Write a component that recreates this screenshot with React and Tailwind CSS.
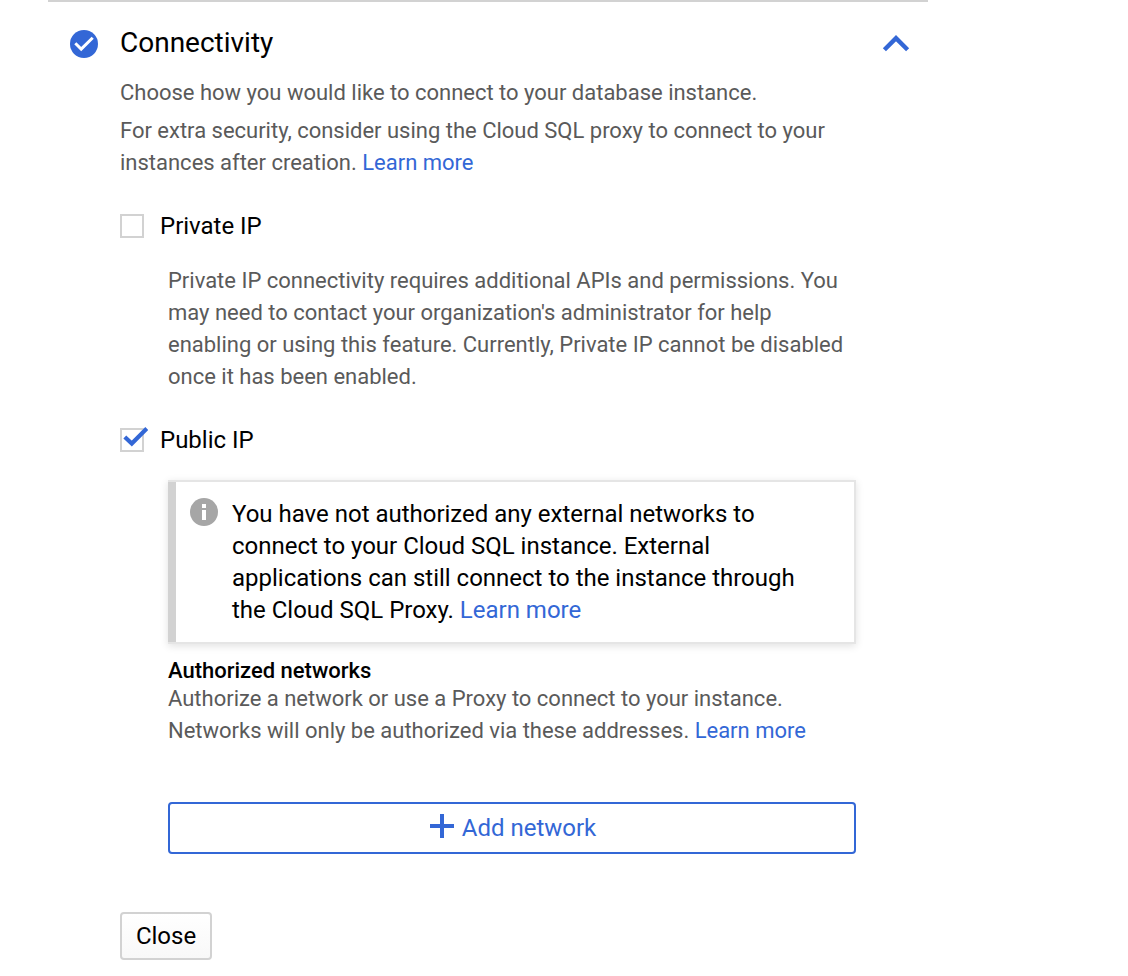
function LearnMore() {
  return <a className="text-[#3367d6]">Learn more</a>;
}

function Checkbox({ label, checked }) {
  return (
    <div className="flex h-8 items-center gap-4">
      <span className="relative size-6 shrink-0 border-2 border-[#d2d2d2] bg-white">
        {checked && (
          <svg className="absolute -top-1 -left-0.5 h-6 w-7" viewBox="0 0 28 24">
            <path d="M4.8 11L11.8 17.5L26.8 2.5" fill="none" stroke="#3367d6" strokeWidth="4.2" />
          </svg>
        )}
      </span>
      <span className="text-2xl leading-8 text-black">{label}</span>
    </div>
  );
}

export default function App() {
  return (
    <main className="h-[976px] w-[1128px] overflow-hidden bg-white pl-12 font-['Roboto',sans-serif] tracking-[-0.008px] whitespace-nowrap">
      <section className="w-[880px] border-t-2 border-[#d2d2d2] text-[22px] leading-8 text-[#5a5a5a]">
        <header className="flex h-[75px] items-center pt-2 pr-[18px] pl-[22px]">
          <svg className="size-7" viewBox="0 0 28 28">
            <circle cx="14" cy="14" r="14" fill="#3367d6" />
            <path d="M5.3 13.3L11.2 19.1L22.7 7.7" fill="none" stroke="white" strokeWidth="3" />
          </svg>
          <h2 className="-mt-0.5 ml-[22px] flex-1 text-[28px] leading-9 text-black">Connectivity</h2>
          <svg className="h-7 w-7" viewBox="0 0 28 28">
            <path d="M2.4 19.8L14 8.2L25.6 19.8" fill="none" stroke="#3367d6" strokeWidth="4.4" />
          </svg>
        </header>
        <div className="pl-[72px]">
          <p>Choose how you would like to connect to your database instance.</p>
          <p className="mt-1.5">
            For extra security, consider using the Cloud SQL proxy to connect to your
            <br />
            instances after creation. <LearnMore />
          </p>
          <div className="mt-[31px]">
            <Checkbox label="Private IP" />
          </div>
          <p className="mt-[23px] pl-12">
            Private IP connectivity requires additional APIs and permissions. You
            <br />
            may need to contact your organization's administrator for help
            <br />
            enabling or using this feature. Currently, Private IP cannot be disabled
            <br />
            once it has been enabled.
          </p>
          <div className="mt-[31px]">
            <Checkbox label="Public IP" checked />
          </div>
          <div className="mt-6 ml-12 w-[688px]">
            <div className="flex h-[164px] border-y-2 border-r-2 border-[#e5e5e5] shadow-[0_2px_8px_rgba(0,0,0,0.12)]">
              <div className="w-2 bg-[#d2d2d2]" />
              <svg className="mt-4 ml-3.5 size-7" viewBox="0 0 28 28">
                <circle cx="14" cy="14" r="14" fill="#a6a6a6" />
                <path d="M12 6h4v4h-4zM12 12h4v10h-4z" fill="white" />
              </svg>
              <p className="mt-4 ml-3.5 text-2xl leading-8 text-black">
                You have not authorized any external networks to
                <br />
                connect to your Cloud SQL instance. External
                <br />
                applications can still connect to the instance through
                <br />
                the Cloud SQL Proxy. <LearnMore />
              </p>
            </div>
            <h3 className="mt-[13px] leading-7 font-medium text-black">Authorized networks</h3>
            <p className="-mt-0.5">
              Authorize a network or use a Proxy to connect to your instance.
              <br />
              Networks will only be authorized via these addresses. <LearnMore />
            </p>
            <button className="mt-[55px] flex h-[52px] w-full items-center justify-center gap-2 rounded-[4px] border-2 border-[#3367d6] pl-0.5 text-2xl leading-8 text-[#3367d6]">
              <svg className="-mt-1 size-6" viewBox="0 0 24 24">
                <path d="M10 0h4v10h10v4H14v10h-4V14H0v-4h10z" fill="#3367d6" />
              </svg>
              Add network
            </button>
          </div>
          <button className="mt-[58px] h-12 w-[92px] rounded-[4px] border-2 border-[#d2d2d2] bg-linear-to-b from-white to-[#f8f8f8] text-2xl leading-8 text-black">
            Close
          </button>
        </div>
      </section>
    </main>
  );
}
